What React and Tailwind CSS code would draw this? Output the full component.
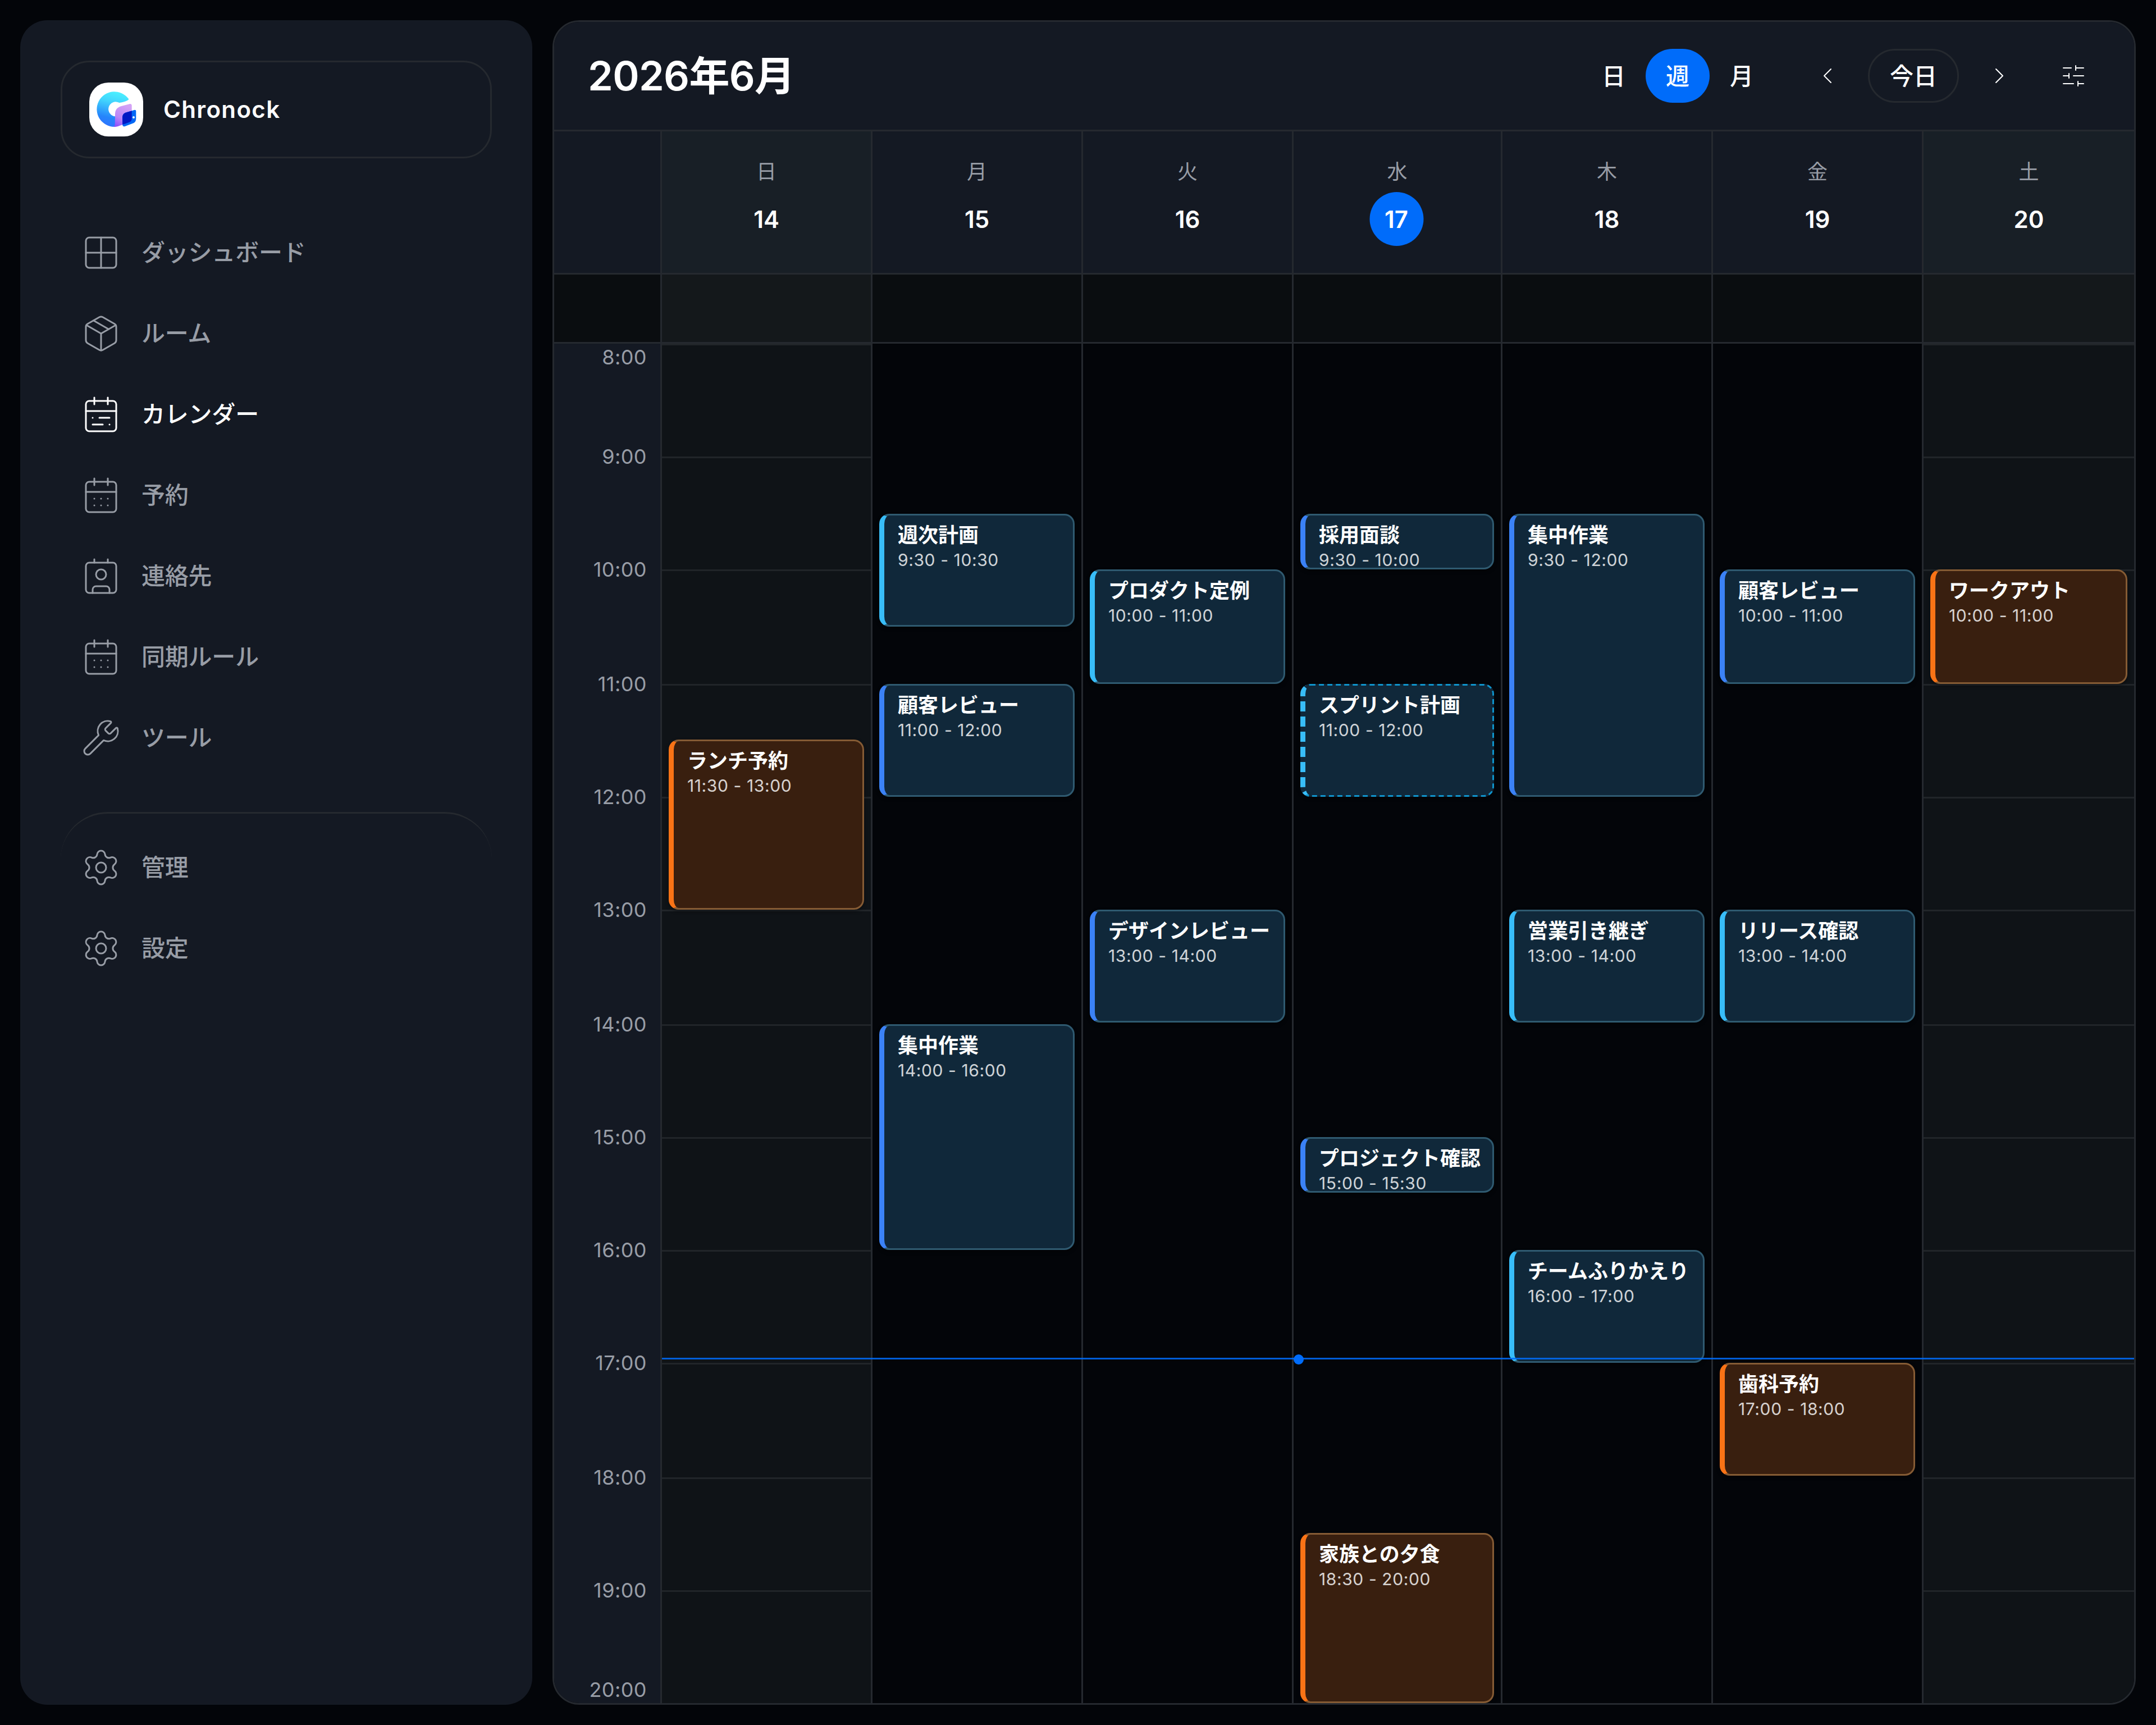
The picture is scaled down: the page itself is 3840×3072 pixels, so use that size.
import React from "react";
import {
  Grid2x2,
  Package,
  CalendarRange,
  CalendarDays,
  Contact,
  Wrench,
  Settings,
  ChevronLeft,
  ChevronRight,
  SlidersHorizontal,
} from "lucide-react";

const NAV = [
  { label: "ダッシュボード", icon: Grid2x2 },
  { label: "ルーム", icon: Package },
  { label: "カレンダー", icon: CalendarRange, active: true },
  { label: "予約", icon: CalendarDays },
  { label: "連絡先", icon: Contact },
  { label: "同期ルール", icon: CalendarDays },
  { label: "ツール", icon: Wrench },
];

const NAV_BOTTOM = [
  { label: "管理", icon: Settings },
  { label: "設定", icon: Settings },
];

// Pixel heights of the hour rows, 8:00 through 19:00
const ROWS = [201, 201, 204, 201, 201, 204, 201, 201, 201, 204, 201, 201];
const FIRST_HOUR = 8;

const DAYS = [
  {
    name: "日", date: 14, weekend: true,
    events: [{ title: "ランチ予約", time: "11:30 - 13:00", top: 705, height: 303, tone: "orange" }],
  },
  {
    name: "月", date: 15,
    events: [
      { title: "週次計画", time: "9:30 - 10:30", top: 303, height: 201, tone: "sky" },
      { title: "顧客レビュー", time: "11:00 - 12:00", top: 606, height: 201, tone: "blue" },
      { title: "集中作業", time: "14:00 - 16:00", top: 1212, height: 402, tone: "blue" },
    ],
  },
  {
    name: "火", date: 16,
    events: [
      { title: "プロダクト定例", time: "10:00 - 11:00", top: 402, height: 204, tone: "sky" },
      { title: "デザインレビュー", time: "13:00 - 14:00", top: 1008, height: 201, tone: "blue" },
    ],
  },
  {
    name: "水", date: 17, today: true,
    events: [
      { title: "採用面談", time: "9:30 - 10:00", top: 303, height: 99, tone: "blue" },
      { title: "スプリント計画", time: "11:00 - 12:00", top: 606, height: 201, tone: "tentative" },
      { title: "プロジェクト確認", time: "15:00 - 15:30", top: 1413, height: 99, tone: "blue" },
      { title: "家族との夕食", time: "18:30 - 20:00", top: 2118, height: 303, tone: "orange" },
    ],
  },
  {
    name: "木", date: 18,
    events: [
      { title: "集中作業", time: "9:30 - 12:00", top: 303, height: 504, tone: "blue" },
      { title: "営業引き継ぎ", time: "13:00 - 14:00", top: 1008, height: 201, tone: "sky" },
      { title: "チームふりかえり", time: "16:00 - 17:00", top: 1614, height: 201, tone: "sky" },
    ],
  },
  {
    name: "金", date: 19,
    events: [
      { title: "顧客レビュー", time: "10:00 - 11:00", top: 402, height: 204, tone: "blue" },
      { title: "リリース確認", time: "13:00 - 14:00", top: 1008, height: 201, tone: "sky" },
      { title: "歯科予約", time: "17:00 - 18:00", top: 1815, height: 201, tone: "orange" },
    ],
  },
  {
    name: "土", date: 20, weekend: true, last: true,
    events: [{ title: "ワークアウト", time: "10:00 - 11:00", top: 402, height: 204, tone: "orange" }],
  },
];

const TONES = {
  sky: "bg-[#10283a] border-[#2f5a70] border-l-[#38bdf8]",
  blue: "bg-[#10283a] border-[#2f5a70] border-l-[#3b82f6]",
  tentative: "bg-[#10283a] border-transparent",
  orange: "bg-[#391f0f] border-[#855b34] border-l-[#f97316]",
};

const COLUMNS = "grid grid-cols-[192px_375px_375px_375px_372px_375px_375px_375px]";

function Logo() {
  return (
    <svg viewBox="0 0 96 96" className="size-24 shrink-0">
      <defs>
        <linearGradient id="ring" x1="0.6" y1="0" x2="0.4" y2="1">
          <stop offset="0" stopColor="#4bf0ff" />
          <stop offset="0.3" stopColor="#42d4fd" />
          <stop offset="0.75" stopColor="#2585fb" />
          <stop offset="1" stopColor="#2f74ff" />
        </linearGradient>
        <linearGradient id="door" x1="0.6" y1="0" x2="0.2" y2="1">
          <stop offset="0" stopColor="#d3a2f6" />
          <stop offset="0.6" stopColor="#bb86f7" />
          <stop offset="1" stopColor="#8a4dfb" />
        </linearGradient>
        <clipPath id="doorClip">
          <path d="M45.3 78.8 C46.2 72 45.8 62 46 55.500 C46.500 47 51 44 57 42 L71.500 38.200 C74 37.700 75.700 38.500 75.700 41 L75.700 64 C75.700 68 74 69.500 71 70.800 L51 78 Z" />
        </clipPath>
      </defs>
      <rect width="96" height="96" rx="34" fill="#fff" />
      <path d="M70.200 29.300 A31.300 31.300 0 1 0 45.300 78.800 L50 60 L46 60.300 A13 13 0 1 1 53.500 36 Q63 34.500 68.500 31.500 Q70.500 30.500 70.200 29.300 Z" fill="url(#ring)" />
      <path d="M42 78.800 Q45.500 78.500 45.700 74 L46 55.500 C46.500 47 51 44 57 42 L71.500 38.200 C74 37.700 75.700 38.500 75.700 41 L75.700 64 C75.700 68 74 69.500 71 70.800 L51 78 Q46 79.300 42 78.800 Z" fill="url(#door)" />
      <path d="M59 63 C59 57 61.500 54.700 65 53.500 L80 48.900 C82 48.400 83.300 49.300 83.300 51 L83.300 63.500 C83.300 69 81.500 71 78 72.500 L63.500 78 C61 78.700 59.300 77.800 59.300 75.500 Z" fill="#0067f5" />
      <path d="M59 63 C59 57 61.500 54.700 65 53.500 L80 48.900 C82 48.400 83.300 49.300 83.300 51 L83.300 63.500 C83.300 69 81.500 71 78 72.500 L63.500 78 C61 78.700 59.300 77.800 59.300 75.500 Z" fill="#0018c4" clipPath="url(#doorClip)" />
      <circle cx="79" cy="62" r="2" fill="#fff" />
    </svg>
  );
}

function NavItem({ label, icon: Icon, active }) {
  return (
    <a className={"flex h-36 items-center gap-9 px-9 text-[42px] font-medium tracking-[-0.005em] " + (active ? "text-white" : "text-[#989da6]")}>
      <Icon size={72} strokeWidth={1} className="shrink-0" />
      <span className="relative -top-px">{label}</span>
    </a>
  );
}

function Sidebar() {
  return (
    <aside className="flex w-[912px] shrink-0 flex-col rounded-[48px] bg-[#141923] p-[72px]">
      <div className="flex h-[174px] items-center gap-9 rounded-[51px] border-[3px] border-[#25292f] px-12">
        <Logo />
        <span className="relative -top-px text-[42px] font-semibold tracking-[0.032em] text-white">Chronock</span>
      </div>
      <nav className="mt-24 flex flex-col">
        {NAV.map((n) => (
          <NavItem key={n.label} {...n} />
        ))}
        <div className="mt-[60px] rounded-t-[84px] border-t-[3px] border-[#25292f] pt-6">
          {NAV_BOTTOM.map((n) => (
            <NavItem key={n.label} {...n} />
          ))}
        </div>
      </nav>
    </aside>
  );
}

function Toolbar() {
  return (
    <header className="flex h-[195px] shrink-0 items-center border-b-[3px] border-[#25292f] bg-[#141923] px-[60px] text-white">
      <h1 className="text-[72px] font-semibold leading-none tracking-[-0.01em]">2026年6月</h1>
      <div className="ml-auto flex items-center text-[42px] font-medium">
        <button className="h-24 w-[114px] rounded-full">日</button>
        <button className="h-24 w-[114px] rounded-full bg-[#006cfa]">週</button>
        <button className="h-24 w-[114px] rounded-full">月</button>
      </div>
      <div className="ml-12 flex items-center gap-6">
        <button className="flex size-24 items-center justify-center">
          <ChevronLeft size={48} strokeWidth={1} />
        </button>
        <button className="h-24 w-[162px] rounded-full border-[3px] border-[#25292f] text-[42px] font-medium">今日</button>
        <button className="flex size-24 items-center justify-center">
          <ChevronRight size={48} strokeWidth={1} />
        </button>
      </div>
      <button className="ml-9 flex size-24 items-center justify-center">
        <SlidersHorizontal size={48} strokeWidth={1} />
      </button>
    </header>
  );
}

function DayHeader({ day }) {
  return (
    <div
      className={
        "flex flex-col items-center border-[#25292f] pt-12 " +
        (day.last ? "" : "border-r-[3px] ") +
        (day.weekend ? "bg-[#181f26]" : "")
      }
    >
      <span className="text-[36px] leading-[48px] text-[#989da6]">{day.name}</span>
      <span
        className={
          "mt-3 flex size-24 items-center justify-center rounded-full text-[42px] font-semibold text-white " +
          (day.today ? "-translate-x-[1.5px] bg-[#006cfa]" : "")
        }
      >
        {day.date}
      </span>
    </div>
  );
}

function Event({ event }) {
  return (
    <div className="absolute inset-x-3" style={{ top: event.top, height: event.height }}>
      <div
        className={
          "h-full overflow-hidden rounded-[18px] border-[3px] border-l-[9px] px-6 pt-3 shadow-[0_3px_6px_rgba(0,0,0,0.4)] " +
          TONES[event.tone]
        }
      >
        <p className="relative top-px whitespace-nowrap text-[36px] font-semibold leading-[45px] text-white">
          {event.title}
        </p>
        <p className="whitespace-nowrap text-[30px] leading-[45px] tracking-[0.02em] text-white/80">{event.time}</p>
      </div>
      {event.tone === "tentative" && (
        <div className="absolute left-0 top-0 h-1/3 w-1/3 origin-top-left scale-[3] rounded-[6px] border border-l-[3px] border-dashed border-[#0f94cc] border-l-[#38bdf8]" />
      )}
    </div>
  );
}

function HourGutter() {
  return (
    <div className="flex flex-col border-r-[3px] border-[#25292f] bg-[#141923] pr-6 text-right text-[36px] leading-[48px] tracking-[0.012em] text-[#989da6]">
      {ROWS.map((h, i) => (
        <div key={i} className="flex flex-col justify-between" style={{ height: h }}>
          <span className={i === 0 ? "" : "-translate-y-1/2"}>{FIRST_HOUR + i}:00</span>
          {i === ROWS.length - 1 && <span>20:00</span>}
        </div>
      ))}
    </div>
  );
}

function DayColumn({ day }) {
  return (
    <div
      className={
        "relative border-[#25292f] " + (day.last ? "" : "border-r-[3px] ") + (day.weekend ? "bg-[#0f1317]" : "")
      }
    >
      {day.weekend &&
        ROWS.map((h, i) => <div key={i} className="border-t-[3px] border-[#212529]" style={{ height: h }} />)}
      {day.events.map((e) => (
        <Event key={e.title + e.time} event={e} />
      ))}
      <div
        className={
          "absolute left-0 top-[1806px] h-[3px] bg-[#006cfa]/85 " + (day.last ? "right-0" : "-right-[3px]")
        }
      />
      {day.today && <div className="absolute left-0 top-[1800px] size-[18px] rounded-full bg-[#006cfa]" />}
    </div>
  );
}

export default function App() {
  return (
    <div className="flex h-[3072px] w-[3840px] gap-9 overflow-hidden bg-[#030509] p-9 font-['Inter','Noto_Sans_CJK_JP',sans-serif]">
      <Sidebar />
      <main className="flex w-[2820px] shrink-0 flex-col overflow-hidden rounded-[48px] border-[3px] border-[#25292f]">
        <Toolbar />
        <div className={COLUMNS + " h-[255px] shrink-0 border-b-[3px] border-[#25292f] bg-[#141923]"}>
          <div className="border-r-[3px] border-[#25292f]" />
          {DAYS.map((d) => (
            <DayHeader key={d.date} day={d} />
          ))}
        </div>
        <div className={COLUMNS + " h-[123px] shrink-0 border-b-[3px] border-[#25292f] bg-[#0a0d10]"}>
          <div className="border-r-[3px] border-[#25292f]" />
          {DAYS.map((d) => (
            <div
              key={d.date}
              className={"border-[#25292f] " + (d.last ? "" : "border-r-[3px] ") + (d.weekend ? "bg-[#14181b]" : "")}
            />
          ))}
        </div>
        <div className={COLUMNS + " h-[2421px] shrink-0"}>
          <HourGutter />
          {DAYS.map((d) => (
            <DayColumn key={d.date} day={d} />
          ))}
        </div>
      </main>
    </div>
  );
}
